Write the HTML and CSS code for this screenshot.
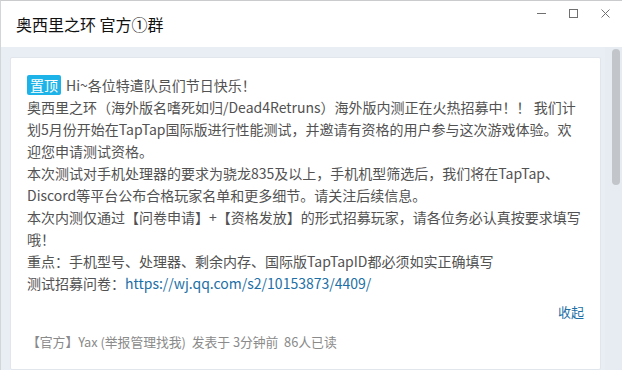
FILE: index.html
```html
<!DOCTYPE html>
<html lang="zh-CN">
<head>
    <meta charset="UTF-8">
    <title>奥西里之环 官方①群</title>
    <link rel="stylesheet" href="styles.css">
</head>
<body>
    <div class="window">
        <!-- Title bar -->
        <header class="titlebar">
            <h1 class="title">奥西里之环 官方①群</h1>
            <div class="controls">
                <span class="ctrl">
                    <svg width="11" height="11" viewBox="0 0 11 11"><path d="M1 5.5h9" stroke="#707070" stroke-width="1"/></svg>
                </span>
                <span class="ctrl">
                    <svg width="11" height="11" viewBox="0 0 11 11"><rect x="1.5" y="1.5" width="8" height="8" fill="none" stroke="#707070" stroke-width="1"/></svg>
                </span>
                <span class="ctrl">
                    <svg width="11" height="11" viewBox="0 0 11 11"><path d="M1.5 1.5l8 8M9.5 1.5l-8 8" stroke="#707070" stroke-width="1"/></svg>
                </span>
            </div>
        </header>

        <!-- Announcement list -->
        <div class="content">
            <div class="feed">
                <div class="post">
                    <div class="post-body">
                        <p><span class="badge">置顶</span>Hi~各位特遣队员们节日快乐！</p>
                        <p>奥西里之环（海外版名嗜死如归/Dead4Retruns）海外版内测正在火热招募中！！ 我们计<br>划5月份开始在TapTap国际版进行性能测试，并邀请有资格的用户参与这次游戏体验。欢<br>迎您申请测试资格。</p>
                        <p>本次测试对手机处理器的要求为骁龙835及以上，手机机型筛选后，我们将在TapTap、<br>Discord等平台公布合格玩家名单和更多细节。请关注后续信息。</p>
                        <p>本次内测仅通过【问卷申请】+【资格发放】的形式招募玩家，请各位务必认真按要求填写<br>哦！</p>
                        <p>重点：手机型号、处理器、剩余内存、国际版TapTapID都必须如实正确填写</p>
                        <p>测试招募问卷：<a class="link" href="#">https://wj.qq.com/s2/10153873/4409/</a></p>
                    </div>
                    <div class="post-fold"><a href="#">收起</a></div>
                    <div class="post-meta">【官方】Yax (举报管理找我)&nbsp;&nbsp;发表于 3分钟前&nbsp;&nbsp;86人已读</div>
                </div>
            </div>
            <div class="scrollbar">
                <div class="thumb"></div>
            </div>
        </div>
    </div>
</body>
</html>
```

FILE: styles.css
```css
/* Page */
body {
    margin: 0;
    padding: 0;
    font-family: "Noto Sans CJK SC", sans-serif;
    background: #ffffff;
}

.window {
    width: 622px;
    height: 370px;
    box-sizing: border-box;
    border-left: 1px solid #d3d6d9;
    border-top: 1px solid #c9cbcd;
    display: flex;
    flex-direction: column;
    overflow: hidden;
}

/* Title bar */
.titlebar {
    height: 46px;
    display: flex;
    justify-content: space-between;
    background: #ffffff;
    flex-shrink: 0;
}

.title {
    margin: 0;
    padding-left: 15px;
    font-size: 16px;
    font-weight: normal;
    line-height: 46px;
    color: #111111;
}

.controls {
    display: flex;
    margin-right: 1px;
}

.ctrl {
    width: 32px;
    height: 25px;
    display: flex;
    justify-content: center;
    align-items: center;
}

/* Content area */
.content {
    flex: 1;
    display: flex;
    background: #e9eef4;
    min-height: 0;
}

.feed {
    flex: 1;
    padding: 10px 4px 0 9px;
}

.post {
    height: 100%;
    box-sizing: border-box;
    background: #ffffff;
    border: 1px solid #e0e6ec;
    border-radius: 2px;
    padding: 16px 4px 0 16px;
}

.post-body {
    font-size: 14px;
    line-height: 22px;
    color: #525252;
}

.post-body p {
    margin: 0;
}

.badge {
    display: inline-block;
    height: 20px;
    line-height: 20px;
    padding: 0 3px;
    margin-right: 5px;
    background: #1eb3e8;
    color: #ffffff;
    font-size: 14px;
    border-radius: 2px;
    vertical-align: top;
    margin-top: 1px;
}

.link {
    color: #1d6fa5;
    text-decoration: none;
}

.post-fold {
    margin-top: 8px;
    padding-right: 12px;
    text-align: right;
    font-size: 13px;
    line-height: 20px;
}

.post-fold a {
    color: #1d6fa5;
    text-decoration: none;
}

.post-meta {
    margin-top: 11px;
    font-size: 12.8px;
    line-height: 18px;
    color: #8a8a8a;
}

/* Fake scrollbar */
.scrollbar {
    width: 17px;
    background: #e6ecf2;
}

.thumb {
    width: 8px;
    height: 136px;
    margin: 2px 0 0 7px;
    border-radius: 4px;
    background: #c2c6ca;
}
```
